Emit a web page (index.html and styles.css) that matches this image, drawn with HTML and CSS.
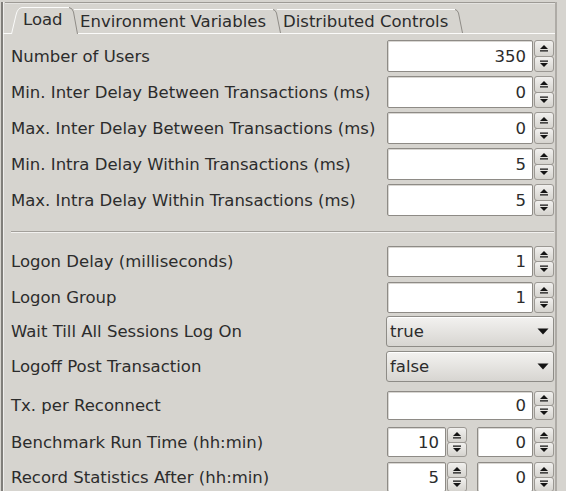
FILE: index.html
```html
<!DOCTYPE html>
<html>
<head>
<meta charset="utf-8">
<link rel="stylesheet" href="styles.css">
</head>
<body>
<div class="window">
  <div class="topline"></div>
  <div class="tabs">
    <div class="tab tab-load">
      <svg viewBox="0 0 67 27" preserveAspectRatio="none"><path class="fill" d="M0.5,27 L5,8 Q6.5,1 11,0.5 H58 Q61.5,1 62.5,5 L66.5,27 Z"/><path class="hi" d="M0.5,27 L5,8 Q6.5,1 11,0.5 H58"/><path class="sh" d="M58,0.5 Q61.5,1 62.5,5 L66.5,27"/></svg>
      <span>Load</span>
    </div>
    <div class="tab tab-env">
      <svg viewBox="0 0 207 24" preserveAspectRatio="none"><path class="fill" d="M0,24 L0,0.5 H199 Q201.5,1 202.5,4 L206.5,24 Z"/><path class="hi" d="M0,0.5 H199"/><path class="sh" d="M199,0.5 Q201.5,1 202.5,4 L206.5,24"/></svg>
      <span>Environment Variables</span>
    </div>
    <div class="tab tab-dist">
      <svg viewBox="0 0 186 24" preserveAspectRatio="none"><path class="fill" d="M0,24 L0,0.5 H178 Q180.5,1 181.5,4 L185.5,24 Z"/><path class="hi" d="M0,0.5 H178"/><path class="sh" d="M178,0.5 Q180.5,1 181.5,4 L185.5,24"/></svg>
      <span>Distributed Controls</span>
    </div>
  </div>

  <div class="panel">
    <div class="section">
      <div class="row">
        <div class="label">Number of Users</div>
        <div class="spin wide"><div class="field">350</div><div class="btns"><div class="btn"><svg viewBox="0 0 10 8"><path d="M1,5 L5,1 L9,5 Z M1,6.2 H9 V7.4 H1 Z"/></svg></div><div class="btn"><svg viewBox="0 0 10 8"><path d="M1,3 L5,7 L9,3 Z M1,0.6 H9 V1.8 H1 Z"/></svg></div></div></div>
      </div>
      <div class="row">
        <div class="label">Min. Inter Delay Between Transactions (ms)</div>
        <div class="spin wide"><div class="field">0</div><div class="btns"><div class="btn"><svg viewBox="0 0 10 8"><path d="M1,5 L5,1 L9,5 Z M1,6.2 H9 V7.4 H1 Z"/></svg></div><div class="btn"><svg viewBox="0 0 10 8"><path d="M1,3 L5,7 L9,3 Z M1,0.6 H9 V1.8 H1 Z"/></svg></div></div></div>
      </div>
      <div class="row">
        <div class="label">Max. Inter Delay Between Transactions (ms)</div>
        <div class="spin wide"><div class="field">0</div><div class="btns"><div class="btn"><svg viewBox="0 0 10 8"><path d="M1,5 L5,1 L9,5 Z M1,6.2 H9 V7.4 H1 Z"/></svg></div><div class="btn"><svg viewBox="0 0 10 8"><path d="M1,3 L5,7 L9,3 Z M1,0.6 H9 V1.8 H1 Z"/></svg></div></div></div>
      </div>
      <div class="row">
        <div class="label">Min. Intra Delay Within Transactions (ms)</div>
        <div class="spin wide"><div class="field">5</div><div class="btns"><div class="btn"><svg viewBox="0 0 10 8"><path d="M1,5 L5,1 L9,5 Z M1,6.2 H9 V7.4 H1 Z"/></svg></div><div class="btn"><svg viewBox="0 0 10 8"><path d="M1,3 L5,7 L9,3 Z M1,0.6 H9 V1.8 H1 Z"/></svg></div></div></div>
      </div>
      <div class="row">
        <div class="label">Max. Intra Delay Within Transactions (ms)</div>
        <div class="spin wide"><div class="field">5</div><div class="btns"><div class="btn"><svg viewBox="0 0 10 8"><path d="M1,5 L5,1 L9,5 Z M1,6.2 H9 V7.4 H1 Z"/></svg></div><div class="btn"><svg viewBox="0 0 10 8"><path d="M1,3 L5,7 L9,3 Z M1,0.6 H9 V1.8 H1 Z"/></svg></div></div></div>
      </div>
    </div>

    <div class="sep"></div>

    <div class="section lower">
      <div class="row r1">
        <div class="label">Logon Delay (milliseconds)</div>
        <div class="spin wide"><div class="field">1</div><div class="btns"><div class="btn"><svg viewBox="0 0 10 8"><path d="M1,5 L5,1 L9,5 Z M1,6.2 H9 V7.4 H1 Z"/></svg></div><div class="btn"><svg viewBox="0 0 10 8"><path d="M1,3 L5,7 L9,3 Z M1,0.6 H9 V1.8 H1 Z"/></svg></div></div></div>
      </div>
      <div class="row r2">
        <div class="label">Logon Group</div>
        <div class="spin wide"><div class="field">1</div><div class="btns"><div class="btn"><svg viewBox="0 0 10 8"><path d="M1,5 L5,1 L9,5 Z M1,6.2 H9 V7.4 H1 Z"/></svg></div><div class="btn"><svg viewBox="0 0 10 8"><path d="M1,3 L5,7 L9,3 Z M1,0.6 H9 V1.8 H1 Z"/></svg></div></div></div>
      </div>
      <div class="row r3">
        <div class="label">Wait Till All Sessions Log On</div>
        <div class="combo"><span>true</span><svg viewBox="0 0 12 7"><path d="M0.5,0.5 L11.5,0.5 L6,6.5 Z"/></svg></div>
      </div>
      <div class="row r4">
        <div class="label">Logoff Post Transaction</div>
        <div class="combo"><span>false</span><svg viewBox="0 0 12 7"><path d="M0.5,0.5 L11.5,0.5 L6,6.5 Z"/></svg></div>
      </div>
      <div class="row r5">
        <div class="label">Tx. per Reconnect</div>
        <div class="spin wide"><div class="field">0</div><div class="btns"><div class="btn"><svg viewBox="0 0 10 8"><path d="M1,5 L5,1 L9,5 Z M1,6.2 H9 V7.4 H1 Z"/></svg></div><div class="btn"><svg viewBox="0 0 10 8"><path d="M1,3 L5,7 L9,3 Z M1,0.6 H9 V1.8 H1 Z"/></svg></div></div></div>
      </div>
      <div class="row r6">
        <div class="label">Benchmark Run Time (hh:min)</div>
        <div class="pair">
          <div class="spin hh"><div class="field">10</div><div class="btns"><div class="btn"><svg viewBox="0 0 10 8"><path d="M1,5 L5,1 L9,5 Z M1,6.2 H9 V7.4 H1 Z"/></svg></div><div class="btn"><svg viewBox="0 0 10 8"><path d="M1,3 L5,7 L9,3 Z M1,0.6 H9 V1.8 H1 Z"/></svg></div></div></div>
          <div class="spin mm"><div class="field">0</div><div class="btns"><div class="btn"><svg viewBox="0 0 10 8"><path d="M1,5 L5,1 L9,5 Z M1,6.2 H9 V7.4 H1 Z"/></svg></div><div class="btn"><svg viewBox="0 0 10 8"><path d="M1,3 L5,7 L9,3 Z M1,0.6 H9 V1.8 H1 Z"/></svg></div></div></div>
        </div>
      </div>
      <div class="row r7">
        <div class="label">Record Statistics After (hh:min)</div>
        <div class="pair">
          <div class="spin hh"><div class="field">5</div><div class="btns"><div class="btn"><svg viewBox="0 0 10 8"><path d="M1,5 L5,1 L9,5 Z M1,6.2 H9 V7.4 H1 Z"/></svg></div><div class="btn"><svg viewBox="0 0 10 8"><path d="M1,3 L5,7 L9,3 Z M1,0.6 H9 V1.8 H1 Z"/></svg></div></div></div>
          <div class="spin mm"><div class="field">0</div><div class="btns"><div class="btn"><svg viewBox="0 0 10 8"><path d="M1,5 L5,1 L9,5 Z M1,6.2 H9 V7.4 H1 Z"/></svg></div><div class="btn"><svg viewBox="0 0 10 8"><path d="M1,3 L5,7 L9,3 Z M1,0.6 H9 V1.8 H1 Z"/></svg></div></div></div>
        </div>
      </div>
    </div>
  </div>
</div>
</body>
</html>
```

FILE: styles.css
```css
html, body {
  margin: 0;
  padding: 0;
}
body {
  width: 566px;
  height: 491px;
  overflow: hidden;
  background: #d6d4cf;
  font-family: "DejaVu Sans", "Liberation Sans", sans-serif;
  font-size: 16.5px;
  color: #2c2c2c;
}
.window {
  margin-left: 1px;
  width: 552px;
  height: 491px;
  border-left: 2px solid #807e7a;
  border-right: 2px solid #aeaba6;
  box-shadow: inset 1px 0 #efeeec;
  box-sizing: content-box;
}
.topline {
  height: 1px;
  margin: 2px 0 0 2px;
  background: #9d9a95;
  border-bottom: 1px solid #e4e3e0;
}
.tabs {
  display: flex;
  align-items: flex-end;
  height: 26px;
  margin-top: 3px;
  border-bottom: 1px solid #fbfbfa;
}
.tab {
  position: relative;
  display: flex;
  align-items: center;
  box-sizing: border-box;
}
.tab svg {
  position: absolute;
  left: 0;
  top: 0;
  width: 100%;
  height: 100%;
  overflow: visible;
}
.tab span {
  position: relative;
  white-space: nowrap;
}
.tab .fill { fill: #d6d4cf; }
.tab .hi { fill: none; stroke: #fbfbfa; stroke-width: 1; }
.tab .sh { fill: none; stroke: #8f8c87; stroke-width: 1; }
.tab-load {
  z-index: 3;
  margin-left: 8px;
  width: 67px;
  height: 27px;
  margin-bottom: -1px;
  padding: 0 0 2px 12px;
}
.tab-env {
  z-index: 2;
  margin-left: -4px;
  width: 207px;
  height: 24px;
  padding: 0 0 0 6px;
}
.tab-dist {
  z-index: 1;
  margin-left: -4px;
  width: 186px;
  height: 24px;
  padding: 0 0 0 6px;
}
.panel {
  padding: 4px 1px 0 8px;
}
.row {
  display: flex;
  align-items: center;
  justify-content: space-between;
  height: 36px;
}
.label {
  white-space: nowrap;
}
.sep {
  height: 1px;
  margin: 13px 0 10px 0;
  background: #a3a09b;
  border-bottom: 1px solid #f2f1ef;
}
.lower .r3 { height: 32px; }
.lower .r4 { height: 38px; }
.lower .r5 { height: 40px; }
.lower .r6 { height: 34px; }
.spin {
  display: flex;
  height: 32px;
}
.lower .spin { height: 31px; }
.lower .r5 .spin { height: 29px; }
.lower .r6 .spin, .lower .r7 .spin { height: 30px; }
.spin.wide { width: 167px; }
.spin.hh { width: 80px; }
.spin.mm { width: 77px; }
.pair {
  display: flex;
  gap: 10px;
}
.field {
  flex: 1;
  background: #ffffff;
  border: 1px solid #8e8b86;
  border-radius: 2px;
  box-shadow: inset 1px 1px 0 #d9d7d3;
  display: flex;
  align-items: center;
  justify-content: flex-end;
  padding-right: 6px;
  box-sizing: border-box;
}
.btns {
  width: 20px;
  display: flex;
  flex-direction: column;
  margin-left: 1px;
}
.btn {
  flex: 1;
  display: flex;
  align-items: center;
  justify-content: center;
  border: 1px solid #9b9893;
  border-radius: 3px;
  background: linear-gradient(#f1f0ee, #d5d3ce);
  box-sizing: border-box;
}
.btn + .btn {
  margin-top: -1px;
}
.btn svg {
  width: 10px;
  height: 8px;
}
.btn path { fill: #141414; }
.combo {
  width: 168px;
  height: 31px;
  box-sizing: border-box;
  border: 1px solid #8e8c87;
  border-radius: 3px;
  background: linear-gradient(#f3f2f0, #d7d5d1);
  box-shadow: inset 0 1px 0 #ffffff;
  display: flex;
  align-items: center;
  justify-content: space-between;
  padding: 0 4px 0 3px;
}
.combo svg {
  width: 12px;
  height: 7px;
}
.combo path { fill: #141414; }
```
